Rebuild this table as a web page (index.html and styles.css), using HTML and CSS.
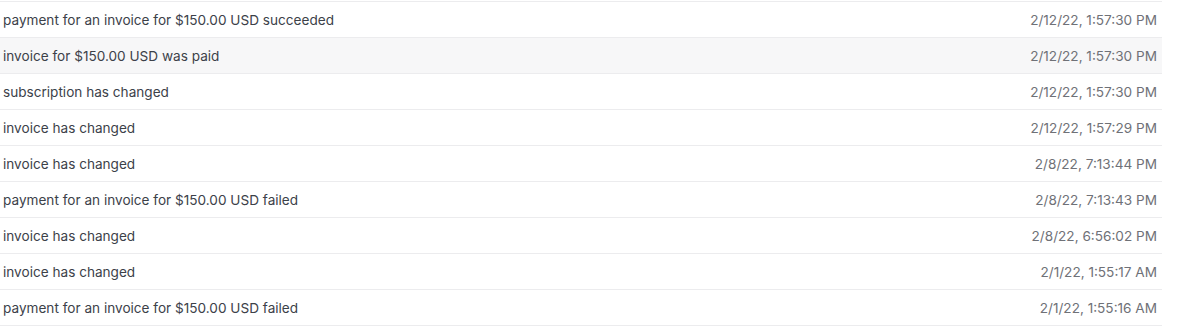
FILE: index.html
```html
<!DOCTYPE html>
<html lang="en">
<head>
<meta charset="utf-8">
<title>Events</title>
<link rel="stylesheet" href="styles.css">
</head>
<body>
<div class="events">
  <div class="row"><span class="desc">payment for an invoice for $150.00 USD succeeded</span><span class="date">2/12/22, 1:57:30 PM</span></div>
  <div class="row hover"><span class="desc">invoice for $150.00 USD was paid</span><span class="date">2/12/22, 1:57:30 PM</span></div>
  <div class="row"><span class="desc">subscription has changed</span><span class="date">2/12/22, 1:57:30 PM</span></div>
  <div class="row"><span class="desc">invoice has changed</span><span class="date">2/12/22, 1:57:29 PM</span></div>
  <div class="row"><span class="desc">invoice has changed</span><span class="date">2/8/22, 7:13:44 PM</span></div>
  <div class="row"><span class="desc">payment for an invoice for $150.00 USD failed</span><span class="date">2/8/22, 7:13:43 PM</span></div>
  <div class="row"><span class="desc">invoice has changed</span><span class="date">2/8/22, 6:56:02 PM</span></div>
  <div class="row"><span class="desc">invoice has changed</span><span class="date">2/1/22, 1:55:17 AM</span></div>
  <div class="row"><span class="desc">payment for an invoice for $150.00 USD failed</span><span class="date">2/1/22, 1:55:16 AM</span></div>
</div>
</body>
</html>
```

FILE: styles.css
```css
html, body {
  margin: 0;
  padding: 0;
  background: #ffffff;
}
body {
  font-family: Inter, "Liberation Sans", sans-serif;
  font-size: 13.6px;
  color: #3c4149;
}
.events {
  width: 1162px;
  margin-top: 1px;
  border-top: 1px solid #ececee;
}
.row {
  display: flex;
  align-items: center;
  justify-content: space-between;
  height: 35px;
  padding: 0 5px 0 3px;
  border-bottom: 1px solid #ececee;
}
.row.hover {
  background: #f7f7f8;
}
.date {
  color: #6f7177;
}
```
